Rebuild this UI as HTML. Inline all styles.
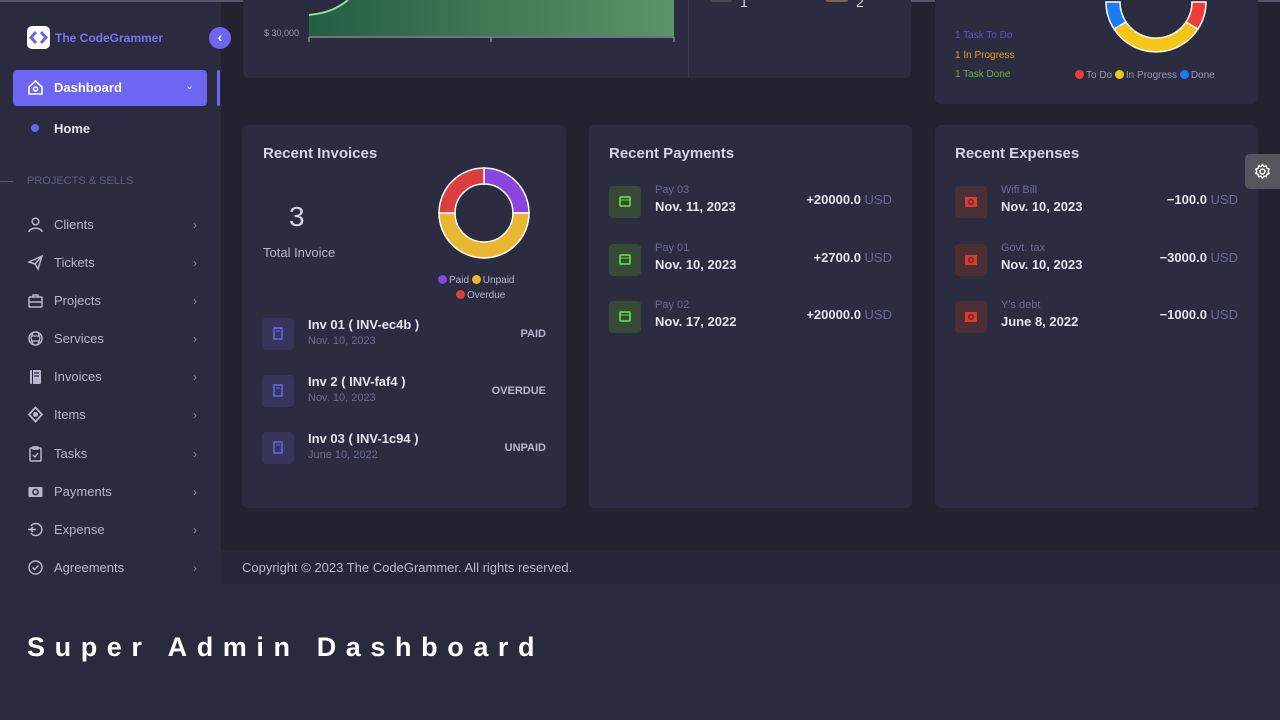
<!DOCTYPE html>
<html><head><meta charset="utf-8"><style>
*{margin:0;padding:0;box-sizing:border-box}
body{width:1280px;height:720px;background:#292a3d;font-family:"Liberation Sans",sans-serif;position:relative;overflow:hidden;color:#dcdce8}
.abs{position:absolute}
.side{left:0;top:0;width:221px;height:584px;background:#2a2b3f}
.main{left:221px;top:0;width:1059px;height:550px;background:#222230}
.foot{left:221px;top:550px;width:1059px;height:34px;background:#252637;font-size:13px;color:#b8b9cc;padding:10px 0 0 21px}
.topline{left:0;top:0;width:1280px;height:2px;background:#55566a}
.card{background:#2b2c40;border-radius:6px}
.nav{position:absolute;left:27px;font-size:13px;color:#b6b7cf;display:flex;align-items:center;width:170px}
.nav svg{width:17px;height:17px;margin-right:10px}
.nav .ch{margin-left:auto;color:#8a8ba3;font-size:12px}
.h{font-size:15px;color:#d4d5e4;font-weight:bold}
.row{position:absolute;left:20px;right:20px;height:34px}
.ic{position:absolute;left:0;top:0;width:32px;height:32px;border-radius:4px}
.t1{position:absolute;left:46px;top:-2px;font-size:11px;color:#6c6d90}
.t2{position:absolute;left:46px;top:13px;font-size:13px;font-weight:bold;color:#e4e4ee}
.amt{position:absolute;right:0;top:6px;font-size:13px;font-weight:bold;color:#e4e4ee}
.amt span{color:#6c6d90;font-weight:normal}
.dot{display:inline-block;width:9px;height:9px;border-radius:50%;vertical-align:-1px;margin-right:2px}
</style></head><body>
<div class="abs main"></div>
<div class="abs side"></div>
<div class="abs topline"></div>
<!-- logo -->
<div class="abs" style="left:27px;top:26px;width:23px;height:23px;background:#fff;border-radius:5px"></div>
<svg class="abs" style="left:29px;top:28px" width="19" height="19" viewBox="0 0 19 19"><path d="M7 4 L2 9.5 L7 15 M12 4 L17 9.5 L12 15" stroke="#6b63f0" stroke-width="3" fill="none"/></svg>
<div class="abs" style="left:55px;top:31px;font-size:12px;font-weight:bold;color:#7a72f4">The CodeGrammer</div>
<div class="abs" style="left:209px;top:27px;width:22px;height:22px;border-radius:50%;background:#6e66f2;color:#fff;font-size:14px;text-align:center;line-height:21px;font-weight:bold">‹</div>
<div class="abs" style="left:13px;top:70px;width:194px;height:36px;background:#6c66f2;border-radius:4px"></div>
<div class="abs" style="left:217px;top:70px;width:3px;height:36px;background:#6c66f2;border-radius:2px"></div>
<svg class="abs" style="left:27px;top:79px" width="17" height="17" viewBox="0 0 17 17"><path d="M2 8 L8.5 2 L15 8 V15 H2 Z" stroke="#fff" stroke-width="1.6" fill="none"/><circle cx="8.5" cy="10" r="2" stroke="#fff" stroke-width="1.5" fill="none"/></svg>
<div class="abs" style="left:54px;top:80px;font-size:13px;font-weight:bold;color:#fff">Dashboard</div>
<div class="abs" style="left:185px;top:79px;font-size:11px;color:#e0e0ff">⌄</div>
<div class="abs" style="left:31px;top:124px;width:8px;height:8px;border-radius:50%;background:#6c66f2"></div>
<div class="abs" style="left:54px;top:121px;font-size:13px;font-weight:bold;color:#e6e6f0">Home</div>
<div class="abs" style="left:0;top:181px;width:13px;height:1px;background:#5a5b74"></div>
<div class="abs" style="left:27px;top:175px;font-size:11px;color:#5f6080">PROJECTS &amp; SELLS</div>

<div class="nav" style="top:216px"><svg viewBox="0 0 17 17"><circle cx="8.5" cy="5.5" r="3.3" stroke="#b6b7cf" stroke-width="1.5" fill="none"/><path d="M2 16 C2 11 15 11 15 16" stroke="#b6b7cf" stroke-width="1.5" fill="none"/></svg>Clients<span class="ch">›</span></div>
<div class="nav" style="top:254px"><svg viewBox="0 0 17 17"><path d="M2 8 L15 2 L11 15 L8 10 Z M8 10 L15 2" stroke="#b6b7cf" stroke-width="1.5" fill="none"/></svg>Tickets<span class="ch">›</span></div>
<div class="nav" style="top:292px"><svg viewBox="0 0 17 17"><rect x="2" y="5" width="13" height="10" rx="1" stroke="#b6b7cf" stroke-width="1.5" fill="none"/><path d="M6 5V3h5v2M2 10h13" stroke="#b6b7cf" stroke-width="1.5" fill="none"/></svg>Projects<span class="ch">›</span></div>
<div class="nav" style="top:330px"><svg viewBox="0 0 17 17"><circle cx="8.5" cy="8.5" r="6.5" stroke="#b6b7cf" stroke-width="1.6" fill="none"/><path d="M4 6h9M4 11h9M6 3l-2 5 2 6M11 3l2 5-2 6" stroke="#b6b7cf" stroke-width="1.2" fill="none"/></svg>Services<span class="ch">›</span></div>
<div class="nav" style="top:368px"><svg viewBox="0 0 17 17"><rect x="3" y="2" width="11" height="14" rx="1" fill="#b6b7cf"/><path d="M7 5h5M7 8h5" stroke="#2a2b3f" stroke-width="1.3"/><path d="M5.5 2v14" stroke="#2a2b3f" stroke-width="1"/></svg>Invoices<span class="ch">›</span></div>
<div class="nav" style="top:406px"><svg viewBox="0 0 17 17"><path d="M8.5 1.5 L15 8.5 L8.5 15.5 L2 8.5 Z" stroke="#b6b7cf" stroke-width="1.8" fill="none"/><circle cx="8.5" cy="8.5" r="2.5" fill="#b6b7cf"/></svg>Items<span class="ch">›</span></div>
<div class="nav" style="top:445px"><svg viewBox="0 0 17 17"><rect x="3" y="3" width="11" height="13" rx="1" stroke="#b6b7cf" stroke-width="1.5" fill="none"/><path d="M6 2h5v2H6zM6 10l2 2 3-4" stroke="#b6b7cf" stroke-width="1.4" fill="none"/></svg>Tasks<span class="ch">›</span></div>
<div class="nav" style="top:483px"><svg viewBox="0 0 17 17"><rect x="1.5" y="4" width="14" height="10" rx="1" fill="#b6b7cf"/><circle cx="8.5" cy="9" r="2.6" stroke="#2a2b3f" stroke-width="1.5" fill="none"/></svg>Payments<span class="ch">›</span></div>
<div class="nav" style="top:521px"><svg viewBox="0 0 17 17"><path d="M4 5 A6 6 0 1 1 4 12M1 8.5h8M6 6l-2.5 2.5L6 11" stroke="#b6b7cf" stroke-width="1.5" fill="none"/></svg>Expense<span class="ch">›</span></div>
<div class="nav" style="top:559px"><svg viewBox="0 0 17 17"><circle cx="8.5" cy="8.5" r="6.5" stroke="#b6b7cf" stroke-width="1.5" fill="none"/><path d="M5.5 8.5l2 2 4-4" stroke="#b6b7cf" stroke-width="1.5" fill="none"/></svg>Agreements<span class="ch">›</span></div>

<!-- top cards -->
<div class="abs card" style="left:243px;top:-10px;width:668px;height:88px"></div>
<div class="abs" style="left:688px;top:0;width:1px;height:78px;background:#3a3b50"></div>
<svg class="abs" style="left:308px;top:0" width="368" height="42" viewBox="0 0 368 42"><defs><linearGradient id="g" x1="0" x2="1"><stop offset="0" stop-color="#245e45"/><stop offset="1" stop-color="#5c9464"/></linearGradient></defs><path d="M1 15 C20 13 30 8 40 0 H366 V36 H1 Z" fill="url(#g)"/><path d="M1 15 C20 13 30 8 40 0" stroke="#8fe09a" stroke-width="2" fill="none"/><path d="M1 37 H366 M1 37v5M183 37v5M366 37v5" stroke="#9a9aa8" stroke-width="1.2"/></svg>
<div class="abs" style="left:264px;top:28px;font-size:9px;color:#9a9aaf">$ 30,000</div>
<div class="abs" style="left:710px;top:-4px;width:22px;height:6px;background:#4a4b55;border-radius:2px"></div>
<div class="abs" style="left:740px;top:-6px;font-size:14px;color:#ddd">1</div>
<div class="abs" style="left:826px;top:-4px;width:22px;height:6px;background:#7a6650;border-radius:2px"></div>
<div class="abs" style="left:856px;top:-6px;font-size:14px;color:#ddd">2</div>

<div class="abs card" style="left:935px;top:-10px;width:323px;height:114px"></div>
<svg class="abs" style="left:1100px;top:0" width="112" height="60" viewBox="0 0 112 60"><g transform="translate(56,2)"><path d="M-50 0 A50 50 0 0 0 -42 27 L-30 20 A36 36 0 0 1 -36 0 Z" fill="#1a7cf5" stroke="#fff" stroke-width="1.5"/><path d="M-42 27 A50 50 0 0 0 42 27 L30 20 A36 36 0 0 1 -30 20 Z" fill="#f5c518" stroke="#fff" stroke-width="1.5"/><path d="M42 27 A50 50 0 0 0 50 0 L36 0 A36 36 0 0 1 30 20 Z" fill="#f23b3b" stroke="#fff" stroke-width="1.5"/></g></svg>
<div class="abs" style="left:955px;top:30px;font-size:10px;color:#5b58b8">1 Task To Do</div>
<div class="abs" style="left:955px;top:50px;font-size:10px;color:#e0a020">1 In Progress</div>
<div class="abs" style="left:955px;top:69px;font-size:10px;color:#5fb840">1 Task Done</div>
<div class="abs" style="left:1075px;top:70px;font-size:10px;color:#9a9bb8"><span class="dot" style="background:#f23b3b"></span>To Do <span class="dot" style="background:#f5c518"></span>In Progress <span class="dot" style="background:#1a7cf5"></span>Done</div>

<!-- invoices -->
<div class="abs card" style="left:242px;top:125px;width:324px;height:383px">
  <div class="abs h" style="left:21px;top:20px">Recent Invoices</div>
  <div class="abs" style="left:47px;top:76px;font-size:28px;color:#d4d5e4">3</div>
  <div class="abs" style="left:21px;top:120px;font-size:13px;color:#b6b7cf">Total Invoice</div>
  <svg class="abs" style="left:196px;top:42px" width="92" height="92" viewBox="-46 -46 92 92"><path d="M0 -45 A45 45 0 0 1 45 0 L29 0 A29 29 0 0 0 0 -29 Z" fill="#8a44e0" stroke="#fff" stroke-width="1.5"/><path d="M45 0 A45 45 0 0 1 -45 0 L-29 0 A29 29 0 0 0 29 0 Z" fill="#eab732" stroke="#fff" stroke-width="1.5"/><path d="M-45 0 A45 45 0 0 1 0 -45 L0 -29 A29 29 0 0 0 -29 0 Z" fill="#dc3d3d" stroke="#fff" stroke-width="1.5"/></svg>
  <div class="abs" style="left:196px;top:150px;font-size:10px;color:#b6b7cf"><span class="dot" style="background:#8a44e0"></span>Paid <span class="dot" style="background:#eab732"></span>Unpaid</div>
  <div class="abs" style="left:214px;top:165px;font-size:10px;color:#b6b7cf"><span class="dot" style="background:#dc3d3d"></span>Overdue</div>
  <div class="row" style="top:193px"><div class="ic" style="background:#35365a"></div><svg class="abs" style="left:11px;top:9px" width="10" height="13"><rect x="1" y="1" width="8" height="11" stroke="#6c66f2" stroke-width="1.5" fill="none"/><path d="M3 4h4" stroke="#6c66f2"/></svg><div class="t2" style="top:-1px">Inv 01 ( INV-ec4b )</div><div class="t1" style="top:17px">Nov. 10, 2023</div><div class="amt" style="top:10px;font-size:11px;color:#b6b7cf">PAID</div></div>
  <div class="row" style="top:250px"><div class="ic" style="background:#35365a"></div><svg class="abs" style="left:11px;top:9px" width="10" height="13"><rect x="1" y="1" width="8" height="11" stroke="#6c66f2" stroke-width="1.5" fill="none"/><path d="M3 4h4" stroke="#6c66f2"/></svg><div class="t2" style="top:-1px">Inv 2 ( INV-faf4 )</div><div class="t1" style="top:17px">Nov. 10, 2023</div><div class="amt" style="top:10px;font-size:11px;color:#b6b7cf">OVERDUE</div></div>
  <div class="row" style="top:307px"><div class="ic" style="background:#35365a"></div><svg class="abs" style="left:11px;top:9px" width="10" height="13"><rect x="1" y="1" width="8" height="11" stroke="#6c66f2" stroke-width="1.5" fill="none"/><path d="M3 4h4" stroke="#6c66f2"/></svg><div class="t2" style="top:-1px">Inv 03 ( INV-1c94 )</div><div class="t1" style="top:17px">June 10, 2022</div><div class="amt" style="top:10px;font-size:11px;color:#b6b7cf">UNPAID</div></div>
</div>

<!-- payments -->
<div class="abs card" style="left:589px;top:125px;width:323px;height:383px">
  <div class="abs h" style="left:20px;top:20px">Recent Payments</div>
  <div class="row" style="top:61px"><div class="ic" style="background:#374a38"></div><svg class="abs" style="left:10px;top:10px" width="12" height="11"><rect x="1" y="1" width="10" height="9" rx="1" stroke="#5fd83a" stroke-width="1.8" fill="none"/><path d="M1 4h10" stroke="#5fd83a"/></svg><div class="t1">Pay 03</div><div class="t2">Nov. 11, 2023</div><div class="amt">+20000.0 <span>USD</span></div></div>
  <div class="row" style="top:119px"><div class="ic" style="background:#374a38"></div><svg class="abs" style="left:10px;top:10px" width="12" height="11"><rect x="1" y="1" width="10" height="9" rx="1" stroke="#5fd83a" stroke-width="1.8" fill="none"/><path d="M1 4h10" stroke="#5fd83a"/></svg><div class="t1">Pay 01</div><div class="t2">Nov. 10, 2023</div><div class="amt">+2700.0 <span>USD</span></div></div>
  <div class="row" style="top:176px"><div class="ic" style="background:#374a38"></div><svg class="abs" style="left:10px;top:10px" width="12" height="11"><rect x="1" y="1" width="10" height="9" rx="1" stroke="#5fd83a" stroke-width="1.8" fill="none"/><path d="M1 4h10" stroke="#5fd83a"/></svg><div class="t1">Pay 02</div><div class="t2">Nov. 17, 2022</div><div class="amt">+20000.0 <span>USD</span></div></div>
</div>

<!-- expenses -->
<div class="abs card" style="left:935px;top:125px;width:323px;height:383px">
  <div class="abs h" style="left:20px;top:20px">Recent Expenses</div>
  <div class="row" style="top:61px"><div class="ic" style="background:#4a2f35"></div><svg class="abs" style="left:10px;top:11px" width="12" height="10"><rect x="0" y="0" width="12" height="10" fill="#e03a2e"/><circle cx="6" cy="5" r="2.3" stroke="#4a2f35" stroke-width="1.3" fill="none"/></svg><div class="t1">Wifi Bill</div><div class="t2">Nov. 10, 2023</div><div class="amt">−100.0 <span>USD</span></div></div>
  <div class="row" style="top:119px"><div class="ic" style="background:#4a2f35"></div><svg class="abs" style="left:10px;top:11px" width="12" height="10"><rect x="0" y="0" width="12" height="10" fill="#e03a2e"/><circle cx="6" cy="5" r="2.3" stroke="#4a2f35" stroke-width="1.3" fill="none"/></svg><div class="t1">Govt. tax</div><div class="t2">Nov. 10, 2023</div><div class="amt">−3000.0 <span>USD</span></div></div>
  <div class="row" style="top:176px"><div class="ic" style="background:#4a2f35"></div><svg class="abs" style="left:10px;top:11px" width="12" height="10"><rect x="0" y="0" width="12" height="10" fill="#e03a2e"/><circle cx="6" cy="5" r="2.3" stroke="#4a2f35" stroke-width="1.3" fill="none"/></svg><div class="t1">Y's debt</div><div class="t2">June 8, 2022</div><div class="amt">−1000.0 <span>USD</span></div></div>
</div>

<div class="abs" style="left:1245px;top:154px;width:35px;height:35px;background:#55565e;border-radius:5px 0 0 5px"></div>
<svg class="abs" style="left:1254px;top:163px" width="17" height="17" viewBox="0 0 24 24"><path d="M12 2l2 3 3.5-1 .5 3.5 3.5 1-1.5 3.5 1.5 3-3.5 1-.5 3.5-3.5-1-2 3-2-3-3.5 1-.5-3.5-3.5-1 1.5-3-1.5-3.5 3.5-1 .5-3.5L10 5z" stroke="#fff" stroke-width="2" fill="none" stroke-linejoin="round"/><circle cx="12" cy="12" r="3.5" stroke="#fff" stroke-width="2" fill="none"/></svg>

<div class="abs foot">Copyright © 2023 The CodeGrammer. All rights reserved.</div>
<div class="abs" style="left:27px;top:632px;font-size:27px;font-weight:bold;color:#fff;letter-spacing:9.6px">Super Admin Dashboard</div>
</body></html>
